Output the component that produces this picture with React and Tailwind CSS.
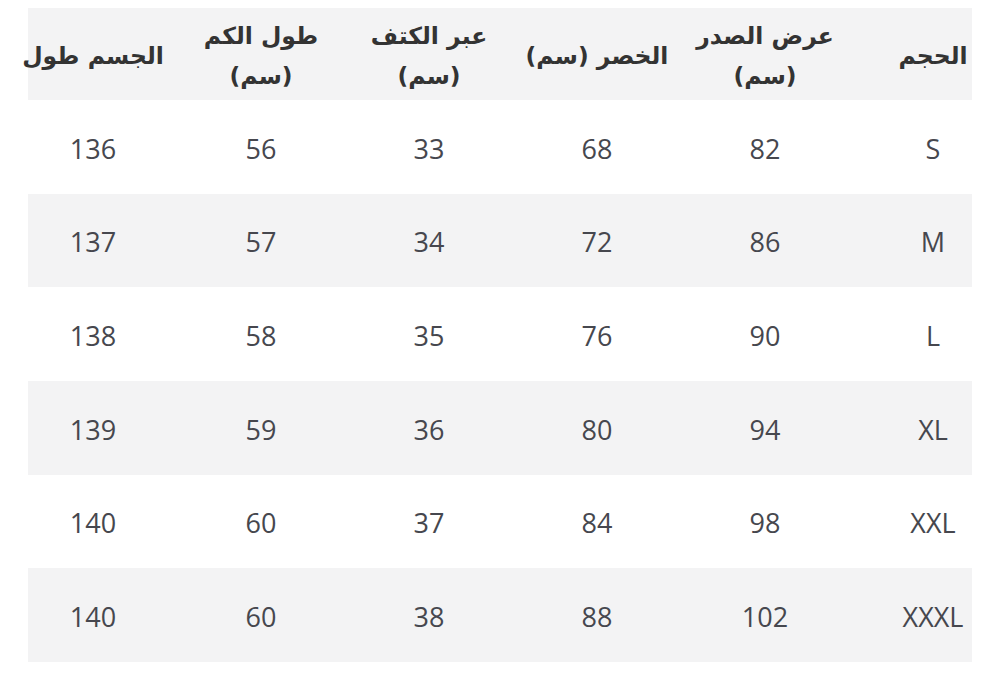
import React from 'react';

const headers = [
  ['الحجم'],
  ['عرض الصدر', '(سم)'],
  ['الخصر (سم)'],
  ['عبر الكتف', '(سم)'],
  ['طول الكم', '(سم)'],
  ['الجسم طول'],
];

const rows = [
  ['S', '82', '68', '33', '56', '136'],
  ['M', '86', '72', '34', '57', '137'],
  ['L', '90', '76', '35', '58', '138'],
  ['XL', '94', '80', '36', '59', '139'],
  ['XXL', '98', '84', '37', '60', '140'],
  ['XXXL', '102', '88', '38', '60', '140'],
];

export default function App() {
  return (
    <div className="w-[1000px] h-[676px] bg-white overflow-hidden pt-[8px]">
      <div dir="rtl" className="ml-[28px] w-[944px]">
        {/* header */}
        <div className="h-[92px] bg-[#f3f3f4]">
          <div className="w-[1008px] -mr-[45px] h-full grid grid-cols-6 pt-[4px]">
            {headers.map((h, i) => (
              <div
                key={i}
                className="flex flex-col items-center justify-center text-center text-[23.5px] leading-[40px] font-semibold text-[#333333] font-['DejaVu_Sans',sans-serif]"
              >
                {h.map((line, j) => (
                  <span key={j} className="whitespace-nowrap">{line}</span>
                ))}
              </div>
            ))}
          </div>
        </div>

        {/* rows */}
        {rows.map((r, i) => (
          <div key={i} className={`h-[93.67px] ${i % 2 === 1 ? 'bg-[#f3f3f4]' : 'bg-white'}`}>
            <div className="w-[1008px] -mr-[45px] h-full grid grid-cols-6 pt-[4px]">
              {r.map((c, j) => (
                <div
                  key={j}
                  className="flex items-center justify-center text-[27px] text-[#46474e] font-['Open_Sans',sans-serif]"
                >
                  {c}
                </div>
              ))}
            </div>
          </div>
        ))}
      </div>
    </div>
  );
}
